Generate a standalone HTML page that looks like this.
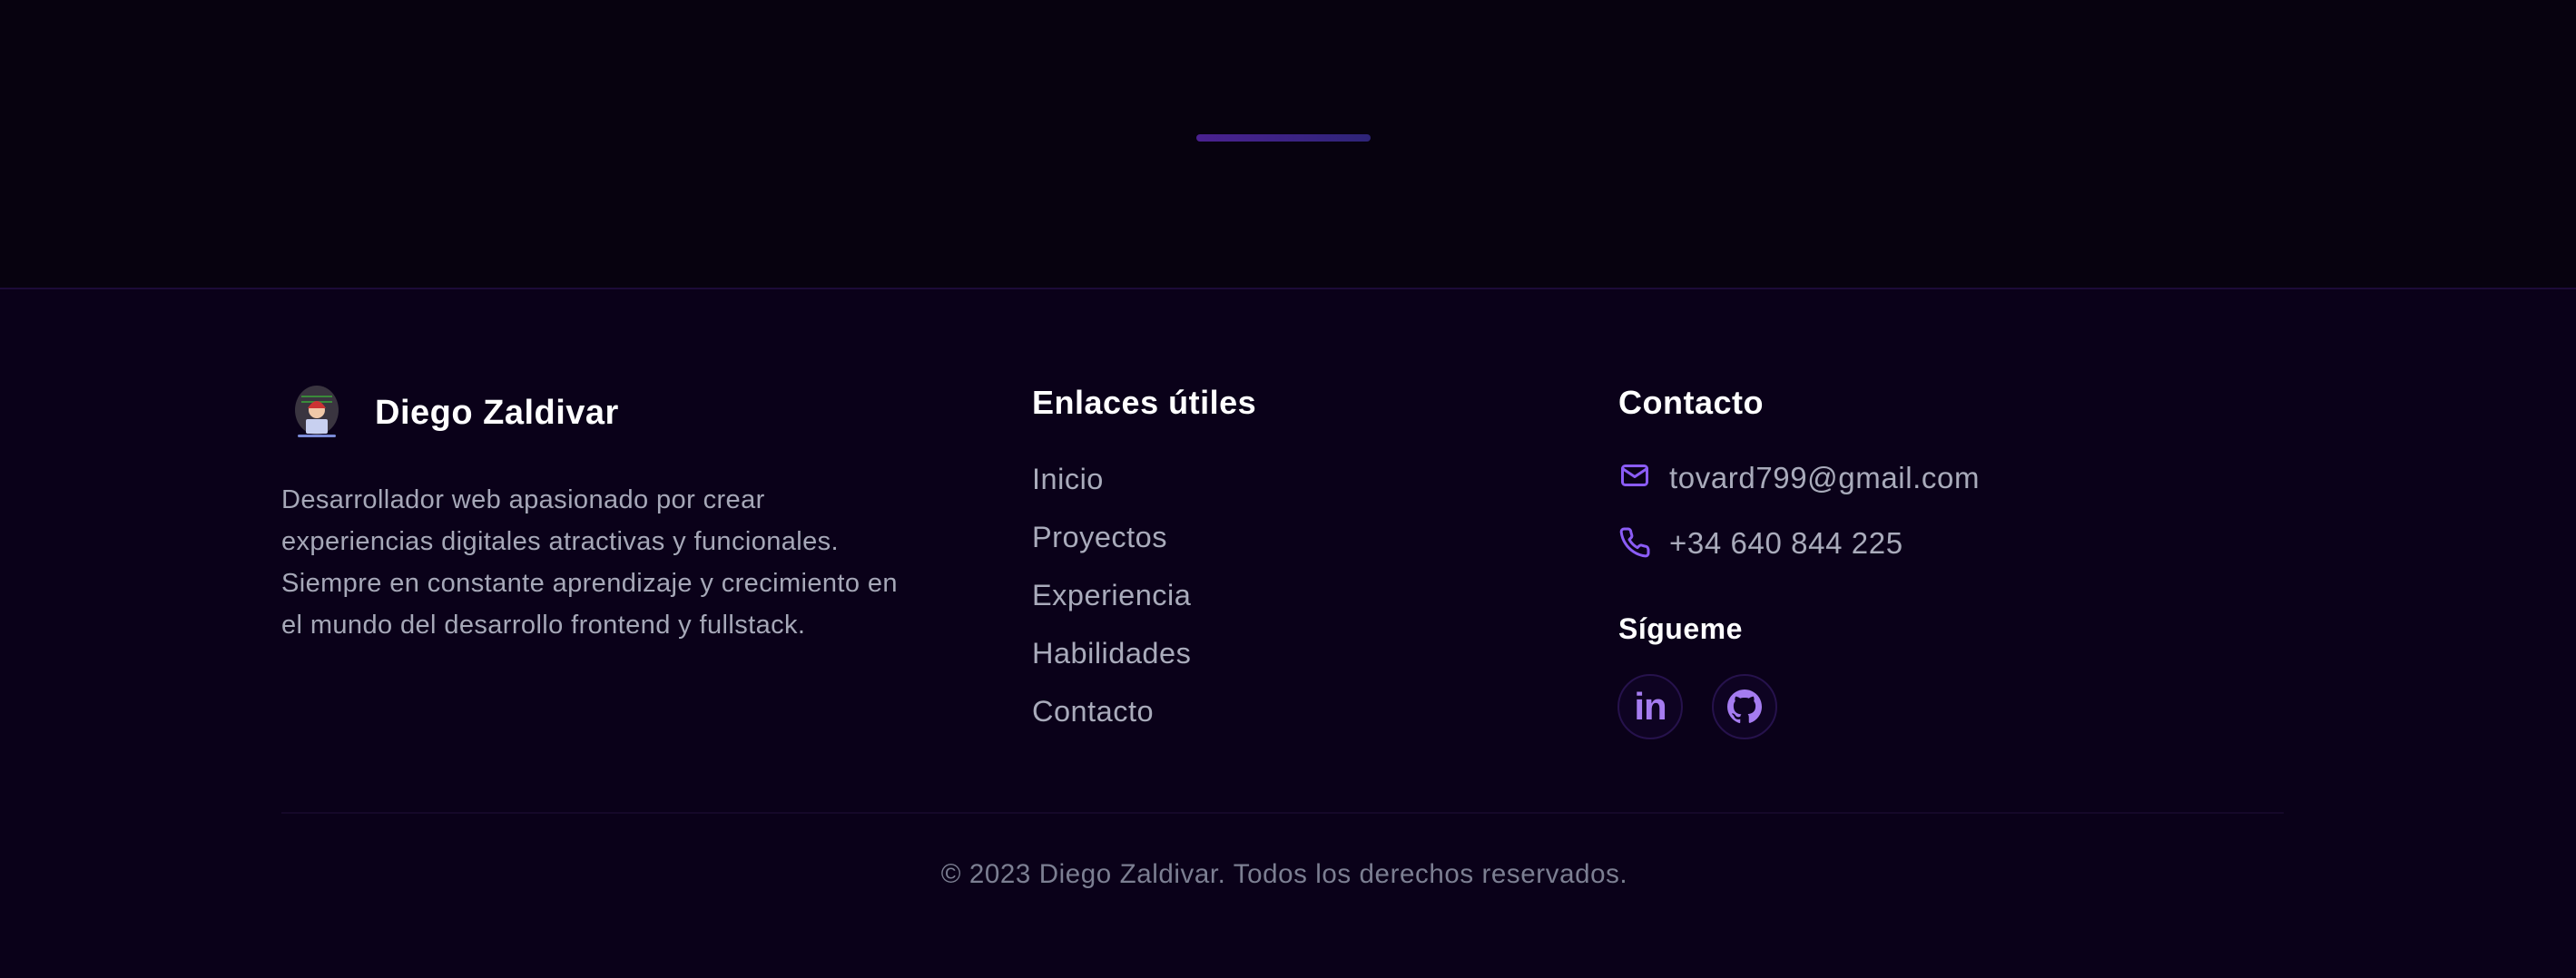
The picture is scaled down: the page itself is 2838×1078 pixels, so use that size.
<!DOCTYPE html>
<html><head><meta charset="utf-8"><style>
*{margin:0;padding:0;box-sizing:border-box}
body{width:2838px;height:1078px;background:#07020f;font-family:"Liberation Sans",sans-serif;position:relative;overflow:hidden}
.bar{position:absolute;left:1318px;top:148px;width:192px;height:8px;border-radius:4px;background:linear-gradient(90deg,#4a2190,#2e2478)}
footer{position:absolute;left:0;top:317px;width:2838px;height:761px;background:#0a0119;border-top:2px solid #1c0b38}
.a{position:absolute;white-space:nowrap}
.name{left:413px;top:115px;font-size:38px;font-weight:bold;color:#fff;letter-spacing:0.5px}
.desc{left:310px;top:209px;font-size:29px;line-height:46px;color:#a6a8b8;letter-spacing:0.4px}
.h{font-size:36px;color:#fff;font-weight:bold;letter-spacing:0.5px}
.link{left:1137px;font-size:32.5px;color:#a9abbb;letter-spacing:0.5px}
.ct{left:1839px;font-size:33px;color:#a9abbb;letter-spacing:0.6px}
.circ{position:absolute;width:72px;height:72px;border-radius:50%;border:2px solid #26124c;background:#0e0322;display:flex;align-items:center;justify-content:center}
.copy{left:0;width:2830px;text-align:center;top:628px;font-size:29.5px;color:#7c7f92;letter-spacing:0.6px}
</style></head><body>
<div class="bar"></div>
<footer>
<svg class="a" style="left:320px;top:105px" width="58" height="62" viewBox="0 0 58 62">
<ellipse cx="29" cy="28" rx="24" ry="27" fill="#3a3540"/>
<rect x="12" y="12" width="34" height="2" fill="#3a8a3a"/><rect x="12" y="18" width="34" height="2" fill="#3a8a3a"/>
<circle cx="29" cy="28" r="9" fill="#f0c8a8"/><path d="M19 26 Q29 10 39 26 Z" fill="#c33"/>
<rect x="17" y="38" width="24" height="16" rx="2" fill="#c8d0f0"/>
<rect x="8" y="55" width="42" height="3" rx="1.5" fill="#7b8bd8"/>
</svg>
<div class="a name">Diego Zaldivar</div>
<div class="a desc">Desarrollador web apasionado por crear<br>experiencias digitales atractivas y funcionales.<br>Siempre en constante aprendizaje y crecimiento en<br>el mundo del desarrollo frontend y fullstack.</div>
<div class="a h" style="left:1137px;top:104px">Enlaces útiles</div>
<div class="a link" style="top:191px">Inicio</div>
<div class="a link" style="top:255px">Proyectos</div>
<div class="a link" style="top:319px">Experiencia</div>
<div class="a link" style="top:383px">Habilidades</div>
<div class="a link" style="top:447px">Contacto</div>
<div class="a h" style="left:1783px;top:104px">Contacto</div>
<svg class="a" style="left:1783px;top:187px" width="36" height="36" viewBox="0 0 24 24" fill="none" stroke="#8b5cf6" stroke-width="2" stroke-linecap="round" stroke-linejoin="round"><rect x="3" y="5" width="18" height="14" rx="2"/><path d="M3 7l9 6 9-6"/></svg>
<div class="a ct" style="top:189px">tovard799@gmail.com</div>
<svg class="a" style="left:1783px;top:261px" width="36" height="36" viewBox="0 0 24 24" fill="none" stroke="#8b5cf6" stroke-width="2" stroke-linecap="round" stroke-linejoin="round"><path d="M22 16.9v3a2 2 0 0 1-2.2 2 19.8 19.8 0 0 1-8.6-3.1 19.5 19.5 0 0 1-6-6A19.8 19.8 0 0 1 2.1 4.2 2 2 0 0 1 4.1 2h3a2 2 0 0 1 2 1.7c.1.9.4 1.8.7 2.7a2 2 0 0 1-.5 2.1L8 9.8a16 16 0 0 0 6 6l1.3-1.3a2 2 0 0 1 2.1-.4c.9.3 1.8.6 2.7.7a2 2 0 0 1 1.7 2z"/></svg>
<div class="a ct" style="top:261px">+34 640 844 225</div>
<div class="a" style="left:1783px;top:356px;font-size:32px;font-weight:bold;color:#fff;letter-spacing:0.5px">Sígueme</div>
<div class="circ" style="left:1782px;top:424px"><span style="font-size:42px;font-weight:bold;color:#a57cf0;letter-spacing:-1px">in</span></div>
<div class="circ" style="left:1886px;top:424px"><svg width="38" height="38" viewBox="0 0 16 16" fill="#a57cf0"><path d="M8 0C3.6 0 0 3.6 0 8c0 3.5 2.3 6.5 5.5 7.6.4.1.5-.2.5-.4v-1.4c-2.200.5-2.7-1-2.7-1-.4-.9-.9-1.2-.9-1.2-.7-.5.1-.5.1-.5.8.1 1.2.8 1.2.8.7 1.2 1.9.9 2.3.7.1-.5.3-.9.5-1.1-1.8-.2-3.6-.9-3.6-4 0-.9.3-1.6.8-2.1-.1-.2-.4-1 .1-2.1 0 0 .7-.2 2.2.8.6-.2 1.3-.3 2-.3s1.4.1 2 .3c1.5-1 2.2-.8 2.2-.8.4 1.1.2 1.9.1 2.1.5.6.8 1.3.8 2.1 0 3.1-1.9 3.7-3.6 3.9.3.3.5.8.5 1.5v2.2c0 .2.1.5.6.4C13.7 14.5 16 11.5 16 8c0-4.4-3.6-8-8-8z"/></svg></div>
<div class="a" style="left:310px;top:576px;width:2206px;height:2px;background:#150829"></div>
<div class="a copy">© 2023 Diego Zaldivar. Todos los derechos reservados.</div>
</footer>
</body></html>
